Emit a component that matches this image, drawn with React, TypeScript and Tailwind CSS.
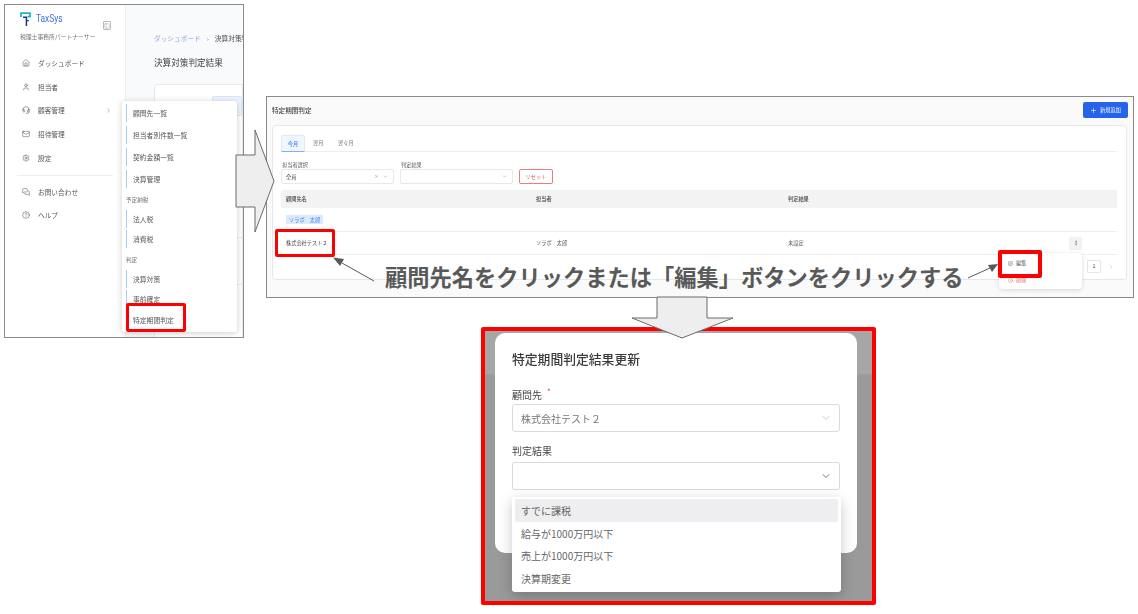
import { Home, User, Headset, Mail, Settings, MessagesSquare, CircleHelp, ChevronRight, ChevronDown, PanelLeft, Plus, X, EllipsisVertical, SquarePen, CircleSlash } from "lucide-react";

const font = { fontFamily: '"Noto Sans CJK JP", "Noto Sans", sans-serif' };

function NavItem({ icon: Icon, label, chevron }: { icon: any; label: string; chevron?: boolean }) {
  return (
    <div className="h-[23.75px] flex items-center pl-[17px] pr-[13px] text-[6.7px] text-[#555]">
      <Icon size={8} strokeWidth={1.6} className="text-[#555] shrink-0" />
      <span className="ml-[8px] flex-1">{label}</span>
      {chevron && <ChevronRight size={7} className="text-[#888]" />}
    </div>
  );
}

function SubItem({ label, bar = true, mt = 0 }: { label: string; bar?: boolean; mt?: number }) {
  return (
    <div className="h-[18px] flex items-center text-[6.8px] text-[#555]" style={{ marginTop: mt }}>
      <div className={bar ? "w-[1px] h-full bg-[#a5cdf8]" : "w-[1px] h-full"} />
      <span className="ml-[6px]">{label}</span>
    </div>
  );
}

function LeftWindow() {
  return (
    <div className="absolute left-[4px] top-[4px] w-[240px] h-[334px] border-[1.5px] border-[#8a8a8a] bg-[#f9fafb] flex overflow-hidden">
      <aside className="w-[121px] shrink-0 bg-white border-r border-[#eeeeee] flex flex-col blur-[0.25px]">
        <div className="h-[19px] mt-[7px] pl-[15px] pr-[14px] flex items-start">
          <svg width="11" height="15" viewBox="0 0 11 15" fill="none" className="shrink-0">
            <path d="M1 5V1.2h9V4.6H7.4" stroke="#25b5c9" strokeWidth="1.8" />
            <path d="M3 5.2h3.4V14" stroke="#1e3a6e" strokeWidth="1.5" />
            <path d="M6.4 8.6h2.4" stroke="#1e3a6e" strokeWidth="1.3" />
          </svg>
          <span className="ml-[5px] text-[10.5px] leading-[14px] text-[#3f6fe0] flex-1 origin-left scale-x-[0.8]" style={{ fontFamily: '"Roboto", sans-serif' }}>TaxSys</span>
          <div className="mt-[9px] w-[8px] h-[9px] border border-[#bbb] rounded-[1px] flex items-center justify-center">
            <PanelLeft size={6} className="text-[#aaa]" />
          </div>
        </div>
        <div className="mt-[2px] pl-[15px] text-[5.8px] leading-[8px] text-[#777] whitespace-nowrap">税理士事務所パートナーサー</div>
        <nav className="mt-[10px]">
          <NavItem icon={Home} label="ダッシュボード" />
          <NavItem icon={User} label="担当者" />
          <NavItem icon={Headset} label="顧客管理" chevron />
          <NavItem icon={Mail} label="招待管理" />
          <NavItem icon={Settings} label="設定" />
        </nav>
        <div className="mx-[12px] mt-[5px] border-t border-[#eeeeee]" />
        <div className="mt-[4px]">
          <NavItem icon={MessagesSquare} label="お問い合わせ" />
          <NavItem icon={CircleHelp} label="ヘルプ" />
        </div>
      </aside>
      <main className="flex-1 pl-[28px] pt-[28px] min-w-0 blur-[0.25px]">
        <div className="text-[6.7px] leading-[10px] whitespace-nowrap flex items-center gap-[6px]">
          <span className="text-[#93a8e0]">ダッシュボード</span>
          <span className="text-[#888]">›</span>
          <span className="text-[#444]">決算対策判定結果</span>
        </div>
        <h1 className="mt-[13px] text-[8.6px] leading-[13px] text-[#3a3a3a] whitespace-nowrap">決算対策判定結果</h1>
        <div className="mt-[15px] h-[300px] bg-white border border-[#e8e8e8] rounded-l-[4px] pt-[11px] flex flex-col">
          <div className="ml-[57px] h-[20px] bg-[#edf4fd] border border-[#d6e6fa] rounded-t-[2px]" />
          <div className="mt-[90px] border-t border-[#ececec]" />
          <div className="mt-[30px] border-t border-[#ececec]" />
          <div className="mt-[46px] border-t border-[#ececec]" />
        </div>
      </main>
      <div className="absolute left-[117px] top-[96px] w-[115px] h-[231px] bg-white rounded-[3px] shadow-[0_1px_6px_rgba(0,0,0,0.2)] pl-[4px] pt-[3px] blur-[0.25px]">
        <SubItem label="顧問先一覧" />
        <SubItem label="担当者別件数一覧" mt={4} />
        <SubItem label="契約金額一覧" mt={4} />
        <SubItem label="決算管理" mt={4} />
        <div className="mt-[8px] text-[5.6px] leading-[8px] text-[#777]">予定納税</div>
        <SubItem label="法人税" mt={6} />
        <SubItem label="消費税" mt={2} />
        <div className="mt-[8px] text-[5.6px] leading-[8px] text-[#777]">判定</div>
        <SubItem label="決算対策" mt={6} />
        <SubItem label="事前確定" mt={2} />
        <SubItem label="特定期間判定" bar={false} mt={3} />
      </div>
      <div className="absolute left-[121px] top-[298px] w-[60px] h-[29px] border-[3px] border-[#ff0000] rounded-[2px]" />
    </div>
  );
}

function MiniSelect({ value, clear }: { value?: string; clear?: boolean }) {
  return (
    <div className="w-[113px] h-[15px] bg-white border border-[#e8e8e8] rounded-[2px] flex items-center pl-[4px] pr-[5px] text-[5.2px] text-[#555]">
      <span className="flex-1">{value}</span>
      {clear && <X size={5} className="text-[#888] mr-[4px]" />}
      <ChevronDown size={5} className="text-[#888]" />
    </div>
  );
}

function SecondWindow() {
  return (
    <div className="absolute left-[266px] top-[96px] w-[868px] h-[202px] border-[1.5px] border-[#8a8a8a] bg-[#fafafa] px-[5px]">
      <div className="h-[28px] flex items-center justify-between pr-[0px] blur-[0.25px]">
        <span className="text-[6.6px] text-[#444] font-medium">特定期間判定</span>
        <div className="mt-[-2px] w-[45px] h-[16px] bg-[#2563eb] rounded-[2px] flex items-center justify-center gap-[3px] text-[5.2px] text-white">
          <Plus size={7} />
          <span>新規追加</span>
        </div>
      </div>
      <div className="relative h-[155px] w-[855px] bg-white border border-[#e5e7eb] rounded-[4px] pl-[8px] pr-[9px] pt-[9px] blur-[0.25px]">
        <div className="flex h-[17px] border-b border-[#eeeeee] text-[5.2px] text-[#777]">
          <div className="w-[24px] h-[17px] bg-[#f0f6fe] border border-[#dbe9fb] border-b-[#7fb2f5] rounded-t-[2px] flex items-center justify-center text-[#3b82f6] font-medium">今月</div>
          <div className="ml-[8px] w-[10px] flex items-center whitespace-nowrap">翌月</div>
          <div className="ml-[15px] flex items-center whitespace-nowrap">翌々月</div>
        </div>
        <div className="mt-[8px] flex gap-[6px]">
          <div>
            <div className="text-[5.2px] leading-[9px] pl-[1px] text-[#555]">担当者選択</div>
            <MiniSelect value="全員" clear />
          </div>
          <div>
            <div className="text-[5.2px] leading-[9px] pl-[1px] text-[#555]">判定結果</div>
            <MiniSelect />
          </div>
          <div className="mt-[9px] w-[34px] h-[15px] bg-white border border-[#e08080] rounded-[2px] flex items-center justify-center text-[5.2px] text-[#d85a5a]">リセット</div>
        </div>
        <div className="mt-[6px] h-[18px] bg-[#f3f3f3] grid grid-cols-[250px_252px_1fr] items-center pl-[5px] text-[5.2px] text-[#444] font-medium">
          <span>顧問先名</span>
          <span>担当者</span>
          <span>判定結果</span>
        </div>
        <div className="h-[24px] border-b border-[#eeeeee] flex items-center pl-[5px]">
          <span className="h-[9px] px-[3px] bg-[#dbeafe] rounded-[1px] flex items-center text-[5.2px] text-[#4b83d8] whitespace-nowrap">ソラボ　太郎</span>
        </div>
        <div className="h-[23px] border-b border-[#eeeeee] grid grid-cols-[250px_252px_1fr_auto] items-center pl-[5px] text-[5.2px] text-[#555]">
          <span className="text-[#444]">株式会社テスト２</span>
          <span>ソラボ　太郎</span>
          <span>未設定</span>
          <div className="w-[13px] h-[13px] mr-[35px] bg-[#f2f2f2] rounded-[1px] flex items-center justify-center">
            <EllipsisVertical size={6} className="text-[#555]" />
          </div>
        </div>
        <div className="mt-[5px] flex justify-end items-center pr-[3px]">
          <div className="w-[14px] h-[13px] bg-white border border-[#e5e5e5] rounded-[1px] flex items-center justify-center text-[5.4px] text-[#444]">1</div>
          <ChevronRight size={6} className="ml-[7px] text-[#aaa]" />
        </div>
      </div>
    </div>
  );
}

function Menu() {
  return (
    <div className="absolute left-[999px] top-[253px] w-[83px] h-[36px] bg-white rounded-[4px] shadow-[0_1px_5px_rgba(0,0,0,0.14)] pl-[9px] pt-[5px] text-[5.2px]">
      <div className="flex items-center h-[10px] text-[#555] gap-[3px]"><SquarePen size={5} /><span>編集</span></div>
      <div className="mt-[7px] flex items-center h-[10px] text-[#e26a6a] gap-[3px]"><CircleSlash size={5} /><span>削除</span></div>
    </div>
  );
}

function ModalField({ label, value, required, muted, gap }: { label: string; value?: string; required?: boolean; muted?: boolean; gap: number }) {
  return (
    <div>
      <div className="h-[14px] flex items-center text-[10px] text-[#444]">
        {label}
        {required && <span className="ml-[5px] -mt-[4px] text-[8px] text-[#e33]">*</span>}
      </div>
      <div className="h-[28px] bg-white border border-[#d9d9d9] rounded-[3px] flex items-center pl-[8px] pr-[7px] text-[10px] text-[#777]" style={{ marginTop: gap }}>
        <span className="flex-1">{value}</span>
        <ChevronDown size={12} className={muted ? "text-[#ccc]" : "text-[#777]"} />
      </div>
    </div>
  );
}

function ThirdPanel() {
  const opts = ["給与が1000万円以下", "売上が1000万円以下", "決算期変更"];
  return (
    <div className="absolute left-[481px] top-[327px] w-[395px] h-[278px] border-[4px] border-[#ff0000] rounded-[2px] overflow-hidden bg-[#9a9a9a]">
      <div className="absolute inset-x-0 top-0 h-[44px] bg-[#a6a6a6] border-b border-[#9e9e9e]" />
      <div className="relative ml-[10px] mt-[2px] w-[362px] h-[220px] bg-white rounded-[10px] pl-[17px] pr-[17px] pt-[17px] blur-[0.2px]">
        <div className="text-[12.8px] leading-[18px] text-[#3a3a3a] font-medium whitespace-nowrap">特定期間判定結果更新</div>
        <div className="mt-[19px]"><ModalField label="顧問先" value="株式会社テスト２" required muted gap={3} /></div>
        <div className="mt-[11px]"><ModalField label="判定結果" gap={5} /></div>
      </div>
      <div className="absolute left-[27px] top-[166px] w-[329px] h-[95px] bg-white rounded-[3px] shadow-[0_4px_14px_rgba(0,0,0,0.22)] px-[3px] pt-[2px] text-[10px] text-[#666]">
        <div className="h-[23px] bg-[#eeeef0] rounded-[2px] flex items-center pl-[6px]">すでに課税</div>
        {opts.map((o) => (
          <div key={o} className="h-[22.5px] flex items-center pl-[6px]">{o}</div>
        ))}
      </div>
    </div>
  );
}

export default function App() {
  return (
    <div className="relative w-[1138px] h-[614px] bg-white overflow-hidden" style={font}>
      <LeftWindow />
      <SecondWindow />
      <Menu />
      <div className="absolute left-[275px] top-[229px] w-[60px] h-[28px] border-[3px] border-[#ff0000] rounded-[2px]" />
      <div className="absolute left-[998px] top-[250px] w-[44px] h-[28px] border-[4px] border-[#ff0000] rounded-[2px]" />
      <ThirdPanel />
      <svg className="absolute inset-0" width="1138" height="614" viewBox="0 0 1138 614" fill="none">
        <polygon points="236,155 255,155 255,130 274,181 255,232 255,207 236,207" fill="#eeeeee" stroke="#6b6b6b" strokeWidth="1" />
        <polygon points="657,297 707,297 707,318 733,318 682,338 632,318 657,318" fill="#eeeeee" stroke="#6b6b6b" strokeWidth="1" />
        <path d="M374 281 L342 263" stroke="#595959" strokeWidth="1" />
        <polygon points="333,257.5 344,259 340,266" fill="#595959" />
        <path d="M968 278 L990 268" stroke="#595959" strokeWidth="1" />
        <polygon points="998,264 992,272 988,265" fill="#595959" />
      </svg>
      <div className="absolute left-[385px] top-[261px] text-[22.25px] leading-[30px] font-bold text-[#595959] whitespace-nowrap">顧問先名をクリックまたは「編集」ボタンをクリックする</div>
    </div>
  );
}
